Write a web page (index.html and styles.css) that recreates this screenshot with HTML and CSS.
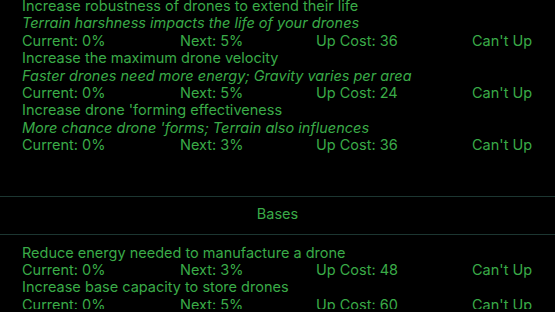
FILE: index.html
```html
<!DOCTYPE html>
<html>
<head>
<meta charset="utf-8">
<link rel="stylesheet" href="styles.css">
</head>
<body>
<div class="screen">
  <div class="section">
    <div class="upgrade">
      <div class="title">Increase robustness of drones to extend their life</div>
      <div class="desc">Terrain harshness impacts the life of your drones</div>
      <div class="stats"><span>Current: 0%</span><span>Next: 5%</span><span>Up Cost: 36</span><span>Can't Up</span></div>
    </div>
    <div class="upgrade">
      <div class="title">Increase the maximum drone velocity</div>
      <div class="desc">Faster drones need more energy; Gravity varies per area</div>
      <div class="stats"><span>Current: 0%</span><span>Next: 5%</span><span>Up Cost: 24</span><span>Can't Up</span></div>
    </div>
    <div class="upgrade">
      <div class="title">Increase drone 'forming effectiveness</div>
      <div class="desc">More chance drone 'forms; Terrain also influences</div>
      <div class="stats"><span>Current: 0%</span><span>Next: 3%</span><span>Up Cost: 36</span><span>Can't Up</span></div>
    </div>
  </div>
  <div class="header">Bases</div>
  <div class="section second">
    <div class="upgrade">
      <div class="title">Reduce energy needed to manufacture a drone</div>
      <div class="stats"><span>Current: 0%</span><span>Next: 3%</span><span>Up Cost: 48</span><span>Can't Up</span></div>
    </div>
    <div class="upgrade">
      <div class="title">Increase base capacity to store drones</div>
      <div class="stats"><span>Current: 0%</span><span>Next: 5%</span><span>Up Cost: 60</span><span>Can't Up</span></div>
    </div>
  </div>
</div>
</body>
</html>
```
FILE: styles.css
```css
html, body {
  margin: 0;
  padding: 0;
  background: #000;
  overflow: hidden;
}
.screen {
  width: 555px;
  height: 312px;
  font-family: Inter, "Open Sans", sans-serif;
  font-size: 14.5px;
  line-height: 17.4px;
  color: #3aab48;
}
.section {
  margin-top: -3px;
  padding: 0 0 42px 22px;
}
.section.second {
  margin-top: 0;
  padding-top: 9px;
  padding-bottom: 0;
}
.desc {
  font-style: italic;
}
.stats {
  display: grid;
  grid-template-columns: 158px 136px 156px auto;
}
.header {
  border-top: 1px solid #1c3631;
  border-bottom: 1px solid #1c3631;
  display: flex;
  align-items: center;
  justify-content: center;
  padding-bottom: 2px;
  box-sizing: border-box;
  height: 39px;
}
```
